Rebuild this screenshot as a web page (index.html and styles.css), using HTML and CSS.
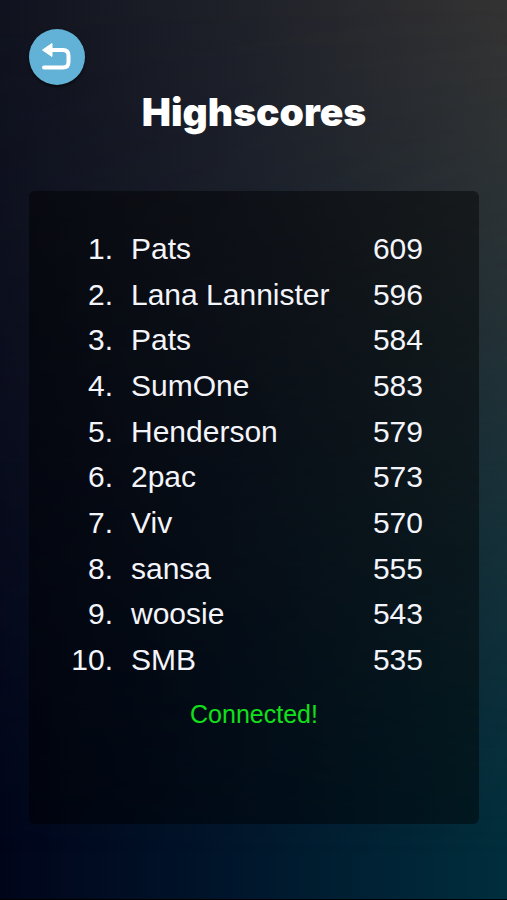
FILE: index.html
```html
<!DOCTYPE html>
<html lang="en">
<head>
<meta charset="utf-8">
<meta name="viewport" content="width=device-width, initial-scale=1">
<title>Highscores</title>
<link rel="stylesheet" href="styles.css">
</head>
<body>
<div class="screen">
  <header class="header">
    <button class="back" type="button" aria-label="Back">
      <svg class="back-icon" viewBox="0 0 56 56" aria-hidden="true">
        <path class="back-line" d="M21 21H34Q39.500 21 39.500 26.500V33Q39.500 38.500 34 38.500H15"/>
        <path class="back-head" d="M13.500 21L23 14.500V27.500Z"/>
      </svg>
    </button>
    <h1 class="title">Highscores</h1>
  </header>
  <main class="panel">
    <table class="scores" aria-label="Highscores">
      <tbody>
        <tr><td class="rank">1.</td><td class="name">Pats</td><td class="score">609</td></tr>
        <tr><td class="rank">2.</td><td class="name">Lana Lannister</td><td class="score">596</td></tr>
        <tr><td class="rank">3.</td><td class="name">Pats</td><td class="score">584</td></tr>
        <tr><td class="rank">4.</td><td class="name">SumOne</td><td class="score">583</td></tr>
        <tr><td class="rank">5.</td><td class="name">Henderson</td><td class="score">579</td></tr>
        <tr><td class="rank">6.</td><td class="name">2pac</td><td class="score">573</td></tr>
        <tr><td class="rank">7.</td><td class="name">Viv</td><td class="score">570</td></tr>
        <tr><td class="rank">8.</td><td class="name">sansa</td><td class="score">555</td></tr>
        <tr><td class="rank">9.</td><td class="name">woosie</td><td class="score">543</td></tr>
        <tr><td class="rank">10.</td><td class="name">SMB</td><td class="score">535</td></tr>
      </tbody>
    </table>
    <p class="status" role="status">Connected!</p>
  </main>
</div>
</body>
</html>
```
FILE: styles.css
```css
* {
  box-sizing: border-box;
}

body {
  margin: 0;
  background: #000;
  color: #f4f5fa;
  font-family: "Liberation Sans", Arial, sans-serif;
}

.screen {
  position: relative;
  isolation: isolate;
  display: flex;
  flex-direction: column;
  min-height: 100vh;
  padding: 29px 28px 75px 29px;
  background: linear-gradient(90deg, #01051a 0%, #00152b 45%, #002e3c 100%);
  border-bottom: 1px solid #000;
}

/* Warm upper tones fade into the blue lower edge. */
.screen::before {
  content: "";
  position: absolute;
  inset: 0;
  z-index: -1;
  background: linear-gradient(90deg, #10131f 0%, #20222a 50%, #343333 100%);
  mask-image: linear-gradient(180deg, #000 0%, rgba(0, 0, 0, 0.8) 25%, transparent 95%);
}

.header {
  display: flex;
  flex-direction: column;
  height: 162px;
}

.back {
  width: 56px;
  height: 56px;
  padding: 0;
  border: 0;
  border-radius: 50%;
  background: #62b1d6;
  box-shadow: 0 2px 3px rgba(0, 0, 0, 0.6);
  cursor: pointer;
}

.back-icon {
  display: block;
  width: 100%;
  height: 100%;
}

.back-line {
  fill: none;
  stroke: #fff;
  stroke-width: 4;
  stroke-linecap: round;
}

.back-head {
  fill: #fff;
  stroke: #fff;
  stroke-width: 1;
  stroke-linejoin: round;
}

.title {
  margin: 0;
  color: #fff;
  font: 900 39px/54px Inter, "Noto Sans", sans-serif;
  text-align: center;
}

.panel {
  flex: 1;
  padding: 35px 52px 35px 40px;
  border-radius: 6px;
  background: rgba(0, 0, 0, 0.45);
}

.scores {
  width: 100%;
  height: 457px;
  border-collapse: collapse;
  font-size: 30px;
  line-height: 36px;
}

.scores td {
  padding: 0;
}

.scores .rank {
  width: 44px;
  text-align: right;
}

.scores .name {
  padding-left: 18px;
}

.scores .score {
  padding-right: 4px;
  text-align: right;
}

.status {
  margin: 16px 0 0 12px;
  color: #11e01b;
  font-size: 25px;
  line-height: 30px;
  text-align: center;
}
```
